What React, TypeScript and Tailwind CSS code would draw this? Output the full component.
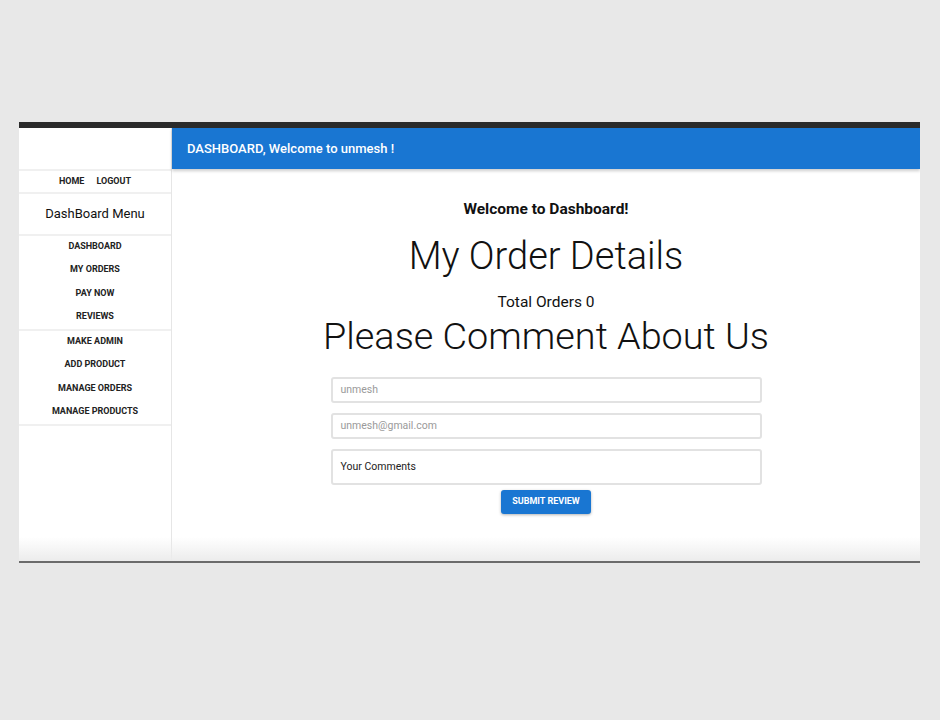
import React from "react";

export default function App() {
  const menu1 = ["DASHBOARD", "MY ORDERS", "PAY NOW", "REVIEWS"];
  const menu2 = ["MAKE ADMIN", "ADD PRODUCT", "MANAGE ORDERS", "MANAGE PRODUCTS"];
  return (
    <div
      className="w-[940px] h-[720px] bg-[#e8e8e8] pt-[122px] pl-[19px]"
      style={{ fontFamily: "Roboto, 'Noto Sans', sans-serif" }}
    >
      <div className="w-[901px] h-[441px] flex flex-col border-b-2 border-[#6b6b6b]">
        <div className="h-[6px] bg-[#2b2b2b]" />
        <div className="flex flex-1 bg-white relative overflow-hidden">
          <div className="w-[153px] border-r border-[#e6e6e6] flex flex-col">
            <div className="h-[43px] shrink-0 border-b-2 border-[#f0f0f0]" />
            <div className="h-[23px] shrink-0 flex items-center justify-center gap-[12px] text-[9px] font-bold text-[#222] border-b-2 border-[#f0f0f0]">
              <span>HOME</span>
              <span>LOGOUT</span>
            </div>
            <div className="h-[42px] shrink-0 flex items-center justify-center text-[13px] text-[#111] border-b-2 border-[#f0f0f0]">
              DashBoard Menu
            </div>
            <div className="flex flex-col shrink-0 border-b-2 border-[#f0f0f0]">
              {menu1.map((m) => (
                <div key={m} className="h-[23.3px] pt-[4px] leading-[12px] text-center text-[9px] font-bold text-[#222]">
                  {m}
                </div>
              ))}
            </div>
            <div className="flex flex-col shrink-0 border-b-2 border-[#f0f0f0]">
              {menu2.map((m) => (
                <div key={m} className="h-[23.3px] pt-[4px] leading-[12px] text-center text-[9px] font-bold text-[#222]">
                  {m}
                </div>
              ))}
            </div>
          </div>
          <div className="flex-1 flex flex-col">
            <div className="h-[41px] shrink-0 bg-[#1976d2] flex items-center pl-[15px] text-white text-[13px] font-medium shadow-[0_2px_3px_rgba(0,0,0,0.2)]">
              DASHBOARD, Welcome to unmesh !
            </div>
            <div className="flex flex-col items-center">
              <div className="mt-[30px] text-[15.5px] font-bold text-[#111] leading-[20px]">Welcome to Dashboard!</div>
              <div className="mt-[17px] text-[38px] font-light text-[#111] leading-[40px]">My Order Details</div>
              <div className="mt-[16px] text-[15.5px] text-[#111] leading-[20px]">Total Orders 0</div>
              <div className="mt-[4px] text-[37.8px] font-light text-[#111] leading-[40px]">Please Comment About Us</div>
              <div className="mt-[21px] w-[431px] flex flex-col gap-[10px] items-center">
                <div className="w-full h-[26px] border-2 border-[#e2e2e2] rounded-[3px] flex items-center pl-[8px] text-[10.5px] text-[#9a9a9a]">
                  unmesh
                </div>
                <div className="w-full h-[26px] border-2 border-[#e2e2e2] rounded-[3px] flex items-center pl-[8px] text-[10.5px] text-[#9a9a9a]">
                  unmesh@gmail.com
                </div>
                <div className="w-full h-[36px] border-2 border-[#e2e2e2] rounded-[3px] flex items-center pl-[8px] text-[10.5px] text-[#222]">
                  Your Comments
                </div>
              </div>
              <div className="mt-[5px] w-[90px] h-[24px] bg-[#1976d2] rounded-[3px] flex items-center justify-center text-white text-[9px] font-bold shadow-[0_1px_3px_rgba(0,0,0,0.3)]">
                SUBMIT REVIEW
              </div>
            </div>
          </div>
          <div className="absolute left-0 right-0 bottom-0 h-[24px] bg-gradient-to-b from-transparent to-[#ececec]" />
        </div>
      </div>
    </div>
  );
}
